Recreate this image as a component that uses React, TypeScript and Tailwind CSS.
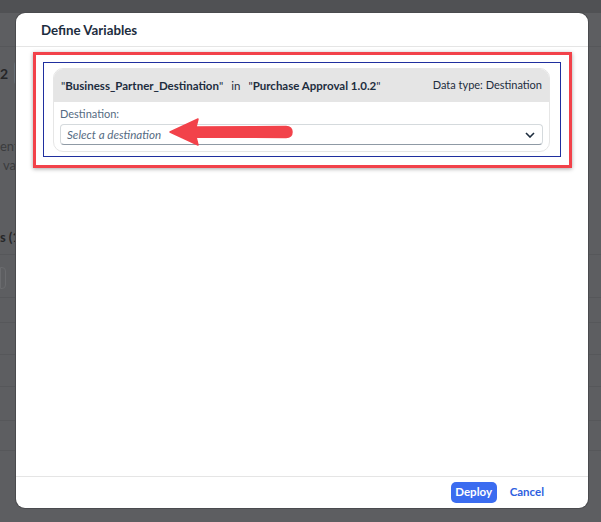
import React from "react";

const font = { fontFamily: 'Lato, "Liberation Sans", sans-serif' };

function RedArrow() {
  return (
    <svg
      width="128"
      height="30"
      viewBox="0 0 128 30"
      className="absolute left-[168px] top-[117px]"
    >
      <path
        d="M2 15 L30 2 L28 10 L118 9.5 Q124 10 124 15 Q124 20 118 20.5 L28 20 L30 28 Z"
        fill="#f2424a"
        stroke="#f2424a"
        strokeWidth="1.5"
        strokeLinejoin="round"
      />
    </svg>
  );
}

function Chevron() {
  return (
    <svg width="10" height="6" viewBox="0 0 10 6">
      <path d="M1 1 L5 5 L9 1" fill="none" stroke="#1d2d3e" strokeWidth="1.6" />
    </svg>
  );
}

function BackgroundPage() {
  return (
    <div className="h-[522px] w-[601px] bg-[#5d5e61] text-[#2a2b2d]" style={font}>
      <div className="h-[13px] bg-[#505154]" />
      <div className="h-[34px] border-b border-[#56575a]" />
      <div className="mt-[14px] flex items-center gap-[6px]">
        <span className="text-[14px] font-bold text-[#252628]">2</span>
        <span className="h-[24px] w-[10px] rounded bg-[#687078]" />
      </div>
      <div className="mt-[52px] text-[13px] leading-[19px] text-[#3b3c3e]">
        <div>ent</div>
        <div className="pl-[3px]">val</div>
      </div>
      <div className="mt-[53px] text-[13px] font-bold text-[#252628]">s (1</div>
      <div className="mt-[6px] h-[44px] border-y border-[#56575a]">
        <div className="mt-[12px] h-[22px] w-[6px] rounded-r border border-[#6a6b6e]" />
      </div>
      <div className="h-[25px] border-b border-[#56575a]" />
      <div className="h-[32px] border-b border-[#56575a]" />
      <div className="h-[32px] border-b border-[#56575a]" />
      <div className="h-[34px] border-b border-[#56575a]" />
      <div className="h-[30px] border-b border-[#56575a]" />
    </div>
  );
}

export default function App() {
  return (
    <div className="relative h-[522px] w-[601px] overflow-hidden" style={font}>
      <BackgroundPage />

      <div className="absolute left-[16px] top-[13px] flex h-[495px] w-[572px] flex-col rounded-[9px] bg-white shadow-[0_0_0_1px_#4a4b4e]">
        <div className="flex h-[34px] items-center border-b border-[#e5e5e5] pl-[25px] pt-[2px] text-[13.3px] font-bold text-[#1d2d3e]">
          Define Variables
        </div>

        <div className="flex-1 pl-[17px] pt-[5px]">
          <div className="h-[116px] w-[539px] border-[3px] border-[#f2424a] p-[7px] shadow-[0_1px_4px_rgba(0,0,0,0.35)]">
            <div className="h-[95px] w-[518px] border border-[#1f2f9f] px-[9px] pt-[5px]">
              <div className="h-[84px] w-[497px] overflow-hidden rounded-[10px] border border-[#e6e6e6]">
                <div className="flex h-[33px] items-center justify-between whitespace-nowrap bg-[#e5e5e5] px-[7px] text-[11.5px] text-[#1d2d3e]">
                  <div className="flex items-center gap-[8px]">
                    <span>
                      "<b>Business_Partner_Destination</b>"
                    </span>
                    <span>in</span>
                    <span>
                      "<b>Purchase Approval 1.0.2</b>"
                    </span>
                  </div>
                  <span className="text-[11px]">Data type: Destination</span>
                </div>
                <div className="px-[6px] pt-[4px]">
                  <div className="text-[11px] leading-[16px] text-[#556b82]">Destination:</div>
                  <div className="mt-[2px] flex h-[21px] items-center justify-between rounded-[4px] border border-[#d5dadd] border-b-[#8f9aa5] pl-[6px] pr-[7px]">
                    <span className="text-[11.6px] italic text-[#556b82]">Select a destination</span>
                    <Chevron />
                  </div>
                </div>
              </div>
            </div>
          </div>
        </div>

        <div className="flex h-[32px] items-center justify-end gap-[13px] border-t border-[#e5e5e5] pr-[44px] pb-[1px]">
          <button className="h-[21px] w-[46px] rounded-[5px] bg-[#3b6cf0] text-[11.5px] font-bold text-white">
            Deploy
          </button>
          <button className="text-[11.5px] font-bold text-[#2f5fe0]">Cancel</button>
        </div>
      </div>

      <RedArrow />
    </div>
  );
}
